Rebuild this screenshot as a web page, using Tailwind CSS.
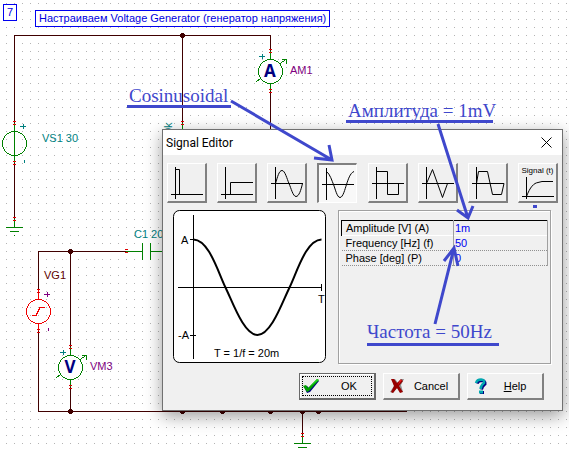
<!DOCTYPE html>
<html lang="en">
<head>
<meta charset="utf-8">
<title>Signal Editor</title>
<script src="https://cdn.jsdelivr.net/npm/@tailwindcss/browser@4"></script>
</head>
<body class="relative min-h-screen overflow-hidden bg-white font-['Liberation_Sans',Arial,sans-serif]">

<!-- Schematic canvas -->
<svg class="absolute inset-0 h-full w-full" fill="none" shape-rendering="crispEdges" role="img" aria-label="Circuit schematic">
  <defs>
    <pattern id="dots" width="8" height="8" patternUnits="userSpaceOnUse"><rect x="6" y="3" width="1" height="1" fill="#b4b4b4"/></pattern>
    <g id="pin"><path d="M-1.5 -1.5h3M-1.5 1.5h3" stroke="#e00000"/></g>
    <g id="node" fill="#400000"><path d="M-1-2h3v1h1v3h-1v1h-3v-1h-1v-3h1z"/></g>
  </defs>
  <rect width="100%" height="100%" fill="url(#dots)"/>
  <g stroke="#400000">
    <path d="M14.500 123V35.500H270.500V51M182.500 35V123M270.500 91V130M14.500 163V219M38.500 290V251.500H126M70.500 251V347M70.500 387V411M38.500 331V411.500H407M302.500 411V435"/>
  </g>
  <g stroke="#008000">
    <path d="M14.500 123V163M14.500 219V227M6 227.500H23M10 231.500H19M14 235.500h1M182.500 123V130M270.500 51V59M270.500 83V91M70.500 347V355M70.500 379V387M126 251.500H142.500M142.500 243V260M150.500 243V260M150 251.500H163M302.500 435V443M294 443.500H311M298 447.500H307"/>
    <circle cx="14.500" cy="143.500" r="12"/>
    <circle cx="270.500" cy="71.500" r="12" fill="#fff"/>
    <circle cx="70.500" cy="367.500" r="12" fill="#fff"/>
    <path d="M280 63.500L286 59.500M282 59.500H286.500V64M256 81.500L261 78.500M80 359.500L86 355.500M82 355.500H86.500V360M56 377.500L61 374.500"/>
  </g>
  <g stroke="#f00000">
    <path d="M38.500 290V299M38.500 323V331M32 315.500H36L40 307.500H45"/>
    <circle cx="38.500" cy="311.500" r="12"/>
  </g>
  <use href="#pin" x="14.500" y="123"/><use href="#pin" x="14.500" y="163"/><use href="#pin" x="14.500" y="219"/>
  <use href="#pin" x="182.500" y="123"/><use href="#pin" x="270.500" y="51"/><use href="#pin" x="270.500" y="91"/>
  <use href="#pin" x="38.500" y="291"/><use href="#pin" x="38.500" y="331"/><use href="#pin" x="70.500" y="347"/>
  <use href="#pin" x="70.500" y="387"/><use href="#pin" x="126.500" y="251"/><use href="#pin" x="302.500" y="435"/>
  <use href="#node" x="182" y="35"/><use href="#node" x="70" y="251"/><use href="#node" x="70" y="411"/>
  <use href="#node" x="182" y="411"/><use href="#node" x="222" y="411"/><use href="#node" x="270" y="411"/>
  <use href="#node" x="302" y="411"/><use href="#node" x="318" y="411"/>
  <path stroke="#008080" d="M20 126.500h6M23.500 124v5M259 56.500h6M262.500 54v5M60 352.500h6M63.500 350v5M24.500 160v3"/>
  <path stroke="#800080" d="M44 294.500h6M47.500 292v5M48.500 328v3"/>
  <g class="text-[11px]" fill="#008080">
    <text x="42" y="142">VS1 30</text>
    <text x="134" y="238">C1 20</text>
    <text transform="translate(172 134) rotate(-90)">0k</text>
    <text x="290" y="74" fill="#800080">AM1</text>
    <text x="90" y="370" fill="#800080">VM3</text>
    <text x="44" y="279" fill="#600000">VG1</text>
  </g>
  <g class="font-['Noto_Sans',sans-serif] text-[17px] font-bold" fill="#000080" text-anchor="middle">
    <text x="270" y="77">A</text>
    <text x="70" y="373">V</text>
  </g>
</svg>
<div class="absolute top-[4px] left-[3px] border border-[#0000f0] bg-white px-[3px] text-[11px] leading-[15px] text-[#0000e0]">7</div>
<h1 class="absolute top-[10px] left-[35px] border border-[#0000f0] bg-white px-[3px] text-[11px] leading-[15px] whitespace-nowrap text-[#0000e0]">Настраиваем Voltage Generator (генератор напряжения)</h1>

<!-- Signal Editor window -->
<section aria-labelledby="dialog-title" class="absolute top-[129px] left-[162px] flex w-[401px] flex-col border border-[#707070] bg-[#f0f0f0] text-[12px] text-black shadow-[0_5px_16px_rgba(0,0,0,0.4)]">
  <header class="flex h-[25px] items-center justify-between bg-white pr-[10px] pl-[3px]">
    <h2 id="dialog-title" class="font-[Roboto,sans-serif] text-[12px]">Signal Editor</h2>
    <button aria-label="Close" class="flex size-[11px] items-center justify-center"><svg class="size-[11px]" viewBox="0 0 11 11" stroke="#000" stroke-width="1"><path d="M.5.5l10 10M10.500.5l-10 10"/></svg></button>
  </header>

  <div class="flex justify-between px-[4px] pt-[8px]" role="toolbar" aria-label="Signal shape">
    <button aria-label="Pulse" class="size-[40px] border-t border-r-2 border-b-2 border-l border-t-white border-r-[#808080] border-b-[#808080] border-l-white"><svg class="size-[37px]" viewBox="1 1 37 37" fill="none" stroke="#000"><path d="M8.500 4V36M4 31.500H36M8.500 6.500H12.500V31.500"/></svg></button>
    <button aria-label="Step" class="size-[40px] border-t border-r-2 border-b-2 border-l border-t-white border-r-[#808080] border-b-[#808080] border-l-white"><svg class="size-[37px]" viewBox="1 1 37 37" fill="none" stroke="#000"><path d="M8.500 4V36M4 31.500H36M13.500 31.500V19.500H36"/></svg></button>
    <button aria-label="Sinusoidal" class="size-[40px] border-t border-r-2 border-b-2 border-l border-t-white border-r-[#808080] border-b-[#808080] border-l-white"><svg class="size-[37px]" viewBox="1 1 37 37" fill="none" stroke="#000"><path d="M8.500 4V36M4 20.500H36M8.500 20.500C10.500 14 12 7.500 15 7.500S20 16 22 20.500S26 33.500 29 33.500S34 27 35.500 20.500"/></svg></button>
    <button aria-label="Cosinusoidal" aria-pressed="true" class="size-[40px] border-t-2 border-r border-b border-l-2 border-t-[#808080] border-r-white border-b-white border-l-[#808080] bg-[#f8f8f8]"><svg class="size-[37px]" viewBox="2 2 37 37" fill="none" stroke="#000"><path d="M9.500 5V37M5 21.500H37M9.500 8.500C13 11 15 18 16.500 21.500S20 34.500 23 34.500S28 26 29.500 21.500S33 10 37 8.500"/></svg></button>
    <button aria-label="Square" class="size-[40px] border-t border-r-2 border-b-2 border-l border-t-white border-r-[#808080] border-b-[#808080] border-l-white"><svg class="size-[37px]" viewBox="1 1 37 37" fill="none" stroke="#000"><path d="M8.500 4V36M4 20.500H36M8.500 8.500H19.500V31.500H30.500V20.500"/></svg></button>
    <button aria-label="Triangle" class="size-[40px] border-t border-r-2 border-b-2 border-l border-t-white border-r-[#808080] border-b-[#808080] border-l-white"><svg class="size-[37px]" viewBox="1 1 37 37" fill="none" stroke="#000"><path d="M8.500 4V36M4 20.500H36M8.500 20.500L14.500 6.500L24.500 34.500L29.500 20.500"/></svg></button>
    <button aria-label="Trapezoid" class="size-[40px] border-t border-r-2 border-b-2 border-l border-t-white border-r-[#808080] border-b-[#808080] border-l-white"><svg class="size-[37px]" viewBox="1 1 37 37" fill="none" stroke="#000"><path d="M8.500 4V36M4 20.500H36M8.500 20.500L10.500 8.500H19.500L24.500 31.500H33.500L36 20.500"/></svg></button>
    <button class="flex size-[40px] flex-col items-center border-t border-r-2 border-b-2 border-l border-t-white border-r-[#808080] border-b-[#808080] border-l-white pt-[1px]"><span class="text-[8px] leading-[12px] whitespace-nowrap">Signal (t)</span><svg class="h-[24px] w-[37px]" viewBox="1 14 37 24" fill="none" stroke="#000"><path d="M8.500 14V36M4 33.500H36M8.500 33.500C12 24 16 20 20 19.500L24 18.500H35"/></svg></button>
  </div>

  <div class="flex justify-between pt-[7px] pr-[11px] pl-[10px]">
    <svg class="h-[154px] w-[154px] text-[11px]" viewBox="0 0 154 154" fill="none" stroke="#000" role="img" aria-label="Cosine wave over one period">
      <rect x=".5" y=".5" width="152" height="152" rx="6" fill="#fff"/>
      <path d="M20.500 5V149M5 77.500H149M148.500 74V81M17 29.500H23M17 125.500H23"/>
      <path stroke-width="2" d="M20.500 29.500C36 30 45 62 52.500 77.500S71 125 84.500 125S109 93 116.500 77.500S133 30 148.500 29.500"/>
      <g fill="#000" stroke="none"><text x="8" y="34">A</text><text x="5" y="129">-A</text><text x="145" y="93">T</text><text x="41" y="147">T = 1/f = 20m</text></g>
    </svg>
    <div class="w-[213px] border border-[#a0a0a0] pt-[9px] pr-[2px] pl-[2px] shadow-[inset_1px_1px_0_#fff,1px_1px_0_#fff]">
      <table class="w-full table-fixed border-collapse text-left text-[11px] leading-[14px]">
        <colgroup><col class="w-[112px]"><col></colgroup>
        <tbody>
          <tr class="h-[15px] border-t border-b border-t-black border-b-white"><th scope="row" class="border-r border-l border-r-[#a0a0a0] border-l-black pl-[4px] font-normal"><label for="amp">Amplitude [V] (A)</label></th><td class="border-r border-r-[#a0a0a0] pl-[1px]"><input id="amp" value="1m" class="block h-[14px] w-full text-[#0000f0] outline-none"></td></tr>
          <tr class="h-[15px] border-b border-dotted border-b-[#909090]"><th scope="row" class="border-r border-r-[#a0a0a0] pl-[4px] font-normal"><label for="freq">Frequency [Hz] (f)</label></th><td class="border-r border-r-[#a0a0a0] pl-[1px]"><input id="freq" value="50" class="block h-[14px] w-full text-[#0000f0] outline-none"></td></tr>
          <tr class="h-[15px] border-b border-dotted border-b-[#909090]"><th scope="row" class="border-r border-r-[#a0a0a0] pl-[4px] font-normal"><label for="phase">Phase [deg] (P)</label></th><td class="border-r border-r-[#a0a0a0] pl-[1px]"><input id="phase" value="0" class="block h-[14px] w-full text-[#0000f0] outline-none"></td></tr>
        </tbody>
      </table>
    </div>
  </div>

  <footer class="flex justify-end gap-[7px] pt-[9px] pr-[18px] pb-[10px] text-[11px]">
    <button class="flex h-[27px] w-[77px] border border-r-2 border-b-2 border-[#696969] p-[2px] shadow-[inset_1px_1px_0_#fff]"><span class="flex w-full items-center border border-dotted border-black"><svg class="size-[16px] shrink-0" viewBox="0 0 16 16"><path d="M1 9l3-1 2 2 8-8 2 1-9 11-3 1z" fill="#000080"/><path d="M0 8l3-1 2 3 9-9 2 1L6 13l-2 1z" fill="#00a000"/><path d="M5 10l9-9 2 1z" fill="#20d020"/></svg><span class="grow pl-[8px] text-center">OK</span></span></button>
    <button class="flex h-[27px] w-[77px] items-center border-t border-r-2 border-b-2 border-l border-t-white border-r-[#808080] border-b-[#808080] border-l-white pr-[2px] pl-[6px]"><svg class="size-[16px] shrink-0" viewBox="0 0 16 16"><path d="M2 1h3l3 4 3-4h3l-3 6 2 7h-3L7 10l-4 5-3-1 4-6z" fill="#909090"/><path d="M1 1h3l3 4 4-4 2 2-4 5 4 6-3 1-3-5-4 5-2-1 3-6z" fill="#980000"/><path d="M10 2l2 0-4 5z" fill="#f02020"/></svg><span class="grow text-center">Cancel</span></button>
    <button class="flex h-[27px] w-[77px] items-center border-t border-r-2 border-b-2 border-l border-t-white border-r-[#808080] border-b-[#808080] border-l-white pr-[2px] pl-[6px]"><svg class="size-[16px] shrink-0" viewBox="0 0 16 16" fill="none"><path d="M3 5.500Q4 2.500 8 2.500Q11.500 3 11 6Q8 8 7.500 11.500" stroke="#000080" stroke-width="3"/><path d="M2 5Q3 1.500 7 1.500Q11 2 10 5Q7 7 6.500 11" stroke="#00a8b0" stroke-width="2.500"/><path d="M6 13h4v3H6z" fill="#000080"/><path d="M5 12.500h4v3H5z" fill="#00a8b0"/></svg><span class="grow text-center"><u>H</u>elp</span></button>
  </footer>
</section>

<!-- Annotations over the window -->
<svg class="pointer-events-none absolute inset-0 h-full w-full" fill="none" stroke="#3f48cc" stroke-width="3">
  <path d="M127 106.500H231M346 121.500H493M367 344.500H499"/>
  <path stroke-width="3" d="M231 101L332 160M329 145L332 160L314 158M438 124L468 218M457 210L468 218L473 206M435 324L454 248M444 261L454 248L458 266M533 206.500H537"/>
  <g class="font-['Liberation_Serif',serif] text-[19px]" fill="#3f48cc" stroke="none">
    <text x="129" y="102">Cosinusoidal</text>
    <text x="348" y="117">Амплитуда = 1mV</text>
    <text x="367" y="338">Частота = 50Hz</text>
  </g>
</svg>
</body>
</html>
